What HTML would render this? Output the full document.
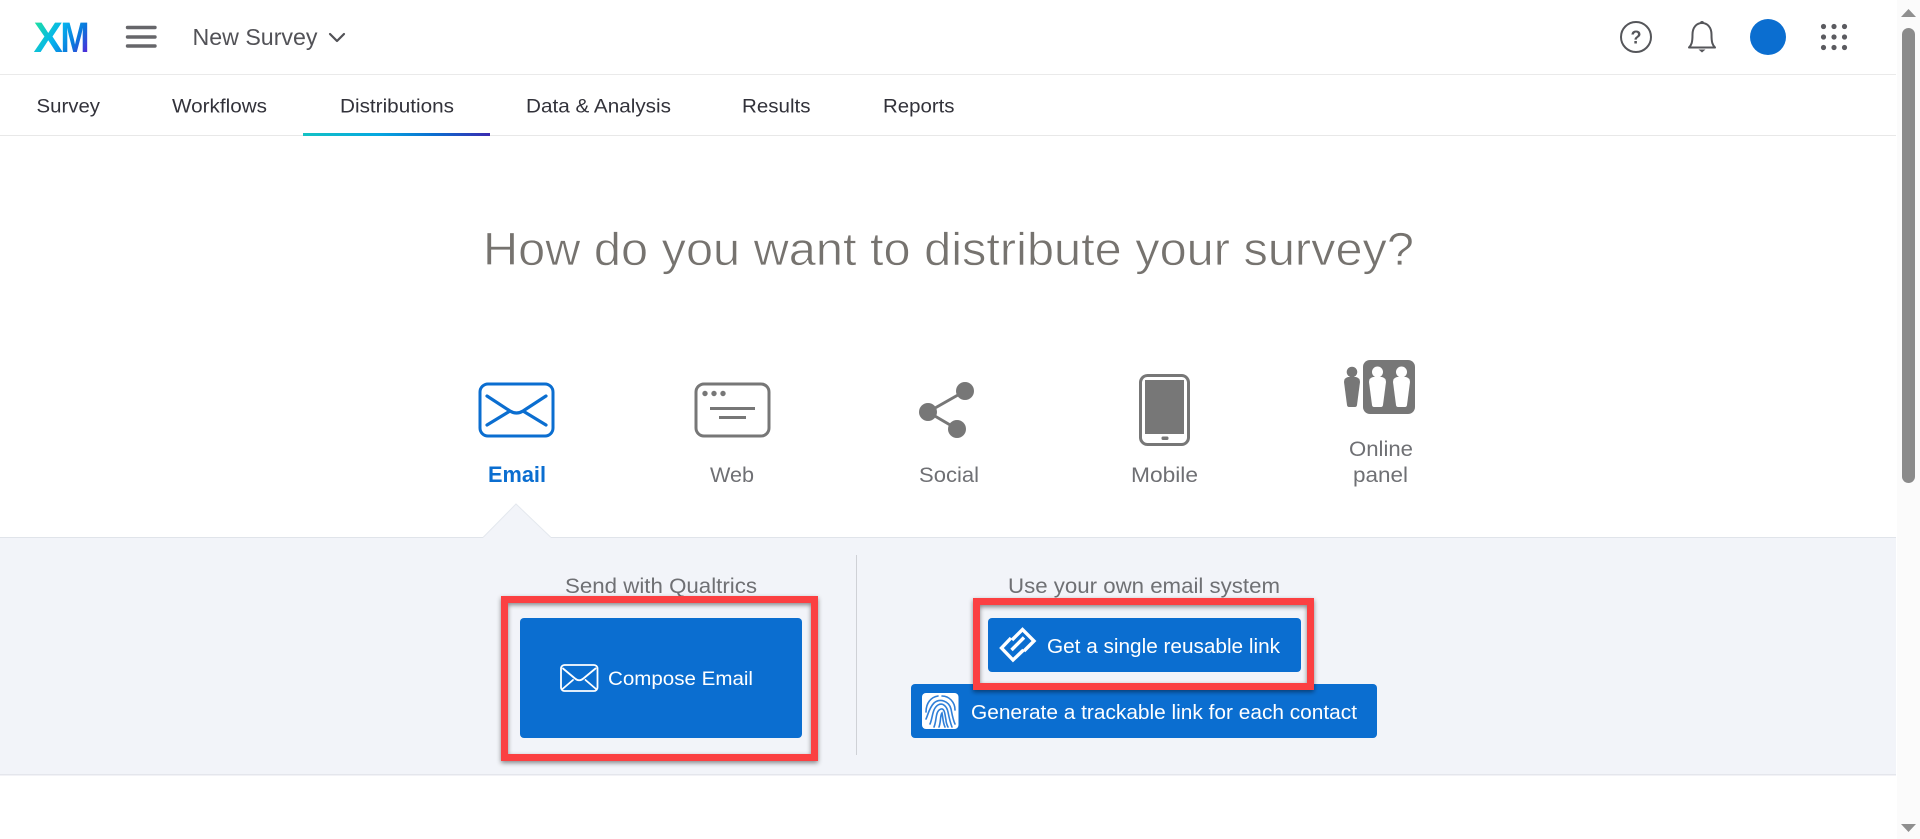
<!DOCTYPE html>
<html lang="en">
<head>
<meta charset="utf-8">
<title>Distributions</title>
<style>
html,body{margin:0;padding:0;background:#fff;overflow:hidden;width:1920px;height:839px}
svg{display:block}
text{font-family:"Liberation Sans",Arial,sans-serif;white-space:pre}
</style>
</head>
<body>
<svg xmlns="http://www.w3.org/2000/svg" width="1920" height="839" viewBox="0 0 1920 839">
<defs>
<linearGradient id="xm" gradientUnits="userSpaceOnUse" x1="36" y1="20" x2="88" y2="54">
<stop offset="0" stop-color="#1fe0a0"/><stop offset=".4" stop-color="#05b4ee"/><stop offset=".72" stop-color="#0b76dc"/><stop offset="1" stop-color="#5a1fd8"/>
</linearGradient>
<linearGradient id="ul" x1="0" y1="0" x2="1" y2="0">
<stop offset="0" stop-color="#14c2c4"/><stop offset=".4" stop-color="#05a8e0"/><stop offset=".7" stop-color="#0b6ed0"/><stop offset="1" stop-color="#3a2ab0"/>
</linearGradient>
<filter id="sh" x="-10%" y="-10%" width="120%" height="125%"><feDropShadow dx="0" dy="2" stdDeviation="2.500" flood-color="#000" flood-opacity=".45"/></filter>
</defs>

<rect width="1920" height="839" fill="#fff"/>

<!-- header -->
<g font-size="43" font-weight="700" fill="url(#xm)">
<text x="33.500" y="52" textLength="29.500" lengthAdjust="spacingAndGlyphs">X</text>
<text x="60.500" y="52" textLength="29" lengthAdjust="spacingAndGlyphs">M</text>
</g>
<g stroke="#66666a" stroke-width="3.400" stroke-linecap="round"><path d="M127.500 27.500H155M127.500 37H155M127.500 46H155"/></g>
<text x="192.500" y="45" font-size="23" fill="#525257" textLength="125" lengthAdjust="spacingAndGlyphs">New Survey</text>
<path d="M330 34l7 7 7-7" fill="none" stroke="#525257" stroke-width="2.200" stroke-linecap="round" stroke-linejoin="round"/>
<rect x="0" y="74" width="1896" height="1" fill="#eaeaea"/>

<circle cx="1636" cy="37" r="15" fill="none" stroke="#55565a" stroke-width="2"/>
<text x="1636" y="43.500" font-size="18" font-weight="700" fill="#55565a" text-anchor="middle">?</text>
<path d="M1689 47.500c2.500-2.500 3.500-5 3.500-13 0-7 4-11.500 9.500-11.500s9.500 4.500 9.500 11.500c0 8 1 10.500 3.500 13z" fill="none" stroke="#55565a" stroke-width="2" stroke-linejoin="round"/>
<path d="M1698.500 49.500h7l-3.500 3z M1700 23a2 2 0 0 1 4 0z" fill="#55565a"/>
<circle cx="1768" cy="37" r="18" fill="#0b6ed0"/>
<g fill="#5b5b60">
<circle cx="1823.500" cy="26.500" r="2.600"/><circle cx="1834" cy="26.500" r="2.600"/><circle cx="1844.500" cy="26.500" r="2.600"/>
<circle cx="1823.500" cy="37" r="2.600"/><circle cx="1834" cy="37" r="2.600"/><circle cx="1844.500" cy="37" r="2.600"/>
<circle cx="1823.500" cy="47.500" r="2.600"/><circle cx="1834" cy="47.500" r="2.600"/><circle cx="1844.500" cy="47.500" r="2.600"/>
</g>

<!-- nav -->
<g font-size="19.500" fill="#32323a">
<text x="36.500" y="112.500" textLength="63.500" lengthAdjust="spacingAndGlyphs">Survey</text>
<text x="172" y="112.500" textLength="95" lengthAdjust="spacingAndGlyphs">Workflows</text>
<text x="340" y="112.500" textLength="114" lengthAdjust="spacingAndGlyphs">Distributions</text>
<text x="526" y="112.500" textLength="145" lengthAdjust="spacingAndGlyphs">Data &amp; Analysis</text>
<text x="742" y="112.500" textLength="68.500" lengthAdjust="spacingAndGlyphs">Results</text>
<text x="883" y="112.500" textLength="71.500" lengthAdjust="spacingAndGlyphs">Reports</text>
</g>
<rect x="0" y="135" width="1896" height="1" fill="#e8e8e8"/>
<rect x="303" y="133" width="187" height="3" fill="url(#ul)"/>

<!-- heading -->
<text x="483" y="265" font-size="46" fill="#76736f" stroke="#fff" stroke-width=".7" textLength="931" lengthAdjust="spacingAndGlyphs">How do you want to distribute your survey?</text>

<!-- channel icons -->
<g fill="none" stroke="#0b6ed0" stroke-linecap="round" stroke-linejoin="round">
<rect x="480" y="384" width="73" height="52" rx="8" stroke-width="3"/>
<path d="M487 396L510 411q6.500 4 13 0L546 396M487 425L510 411M546 425L523 411" stroke-width="3.200"/>
</g>
<g fill="none" stroke="#777" stroke-width="3">
<rect x="696" y="384" width="73" height="52" rx="8"/>
<path d="M710 408.500H755M719 417.500H746"/>
</g>
<g fill="#777"><circle cx="705" cy="393.500" r="2.700"/><circle cx="714" cy="393.500" r="2.700"/><circle cx="723" cy="393.500" r="2.700"/></g>

<g fill="#777">
<path d="M928 412L965 391M928 412L957 429" stroke="#777" stroke-width="3" fill="none"/>
<circle cx="965" cy="391" r="9"/><circle cx="928" cy="412" r="9"/><circle cx="957" cy="429" r="9"/>
</g>

<rect x="1140.500" y="375.500" width="48" height="69" rx="7" fill="none" stroke="#777" stroke-width="3"/>
<rect x="1145" y="380" width="39" height="54" fill="#777"/>
<rect x="1161.500" y="436.500" width="7" height="3.500" rx="1.500" fill="#777"/>

<rect x="1363" y="360" width="52" height="54" rx="7" fill="#777"/>
<g fill="#777">
<circle cx="1352" cy="372" r="5.300"/>
<path d="M1344 382q0-4 4-5h8q4 1 4 5l-3 23q-.3 2-2 2h-6q-1.700 0-2-2z"/>
</g>
<g fill="#fff">
<circle cx="1377.500" cy="372" r="5.500"/><circle cx="1401.500" cy="372" r="5.500"/>
<path d="M1369 382q0-4 4-5h9q4 1 4 5l-3 23q-.3 2-2 2h-7q-1.700 0-2-2z"/>
<path d="M1393 382q0-4 4-5h9q4 1 4 5l-3 23q-.3 2-2 2h-7q-1.700 0-2-2z"/>
</g>

<!-- labels -->
<text x="488" y="482" font-size="22" font-weight="700" fill="#0b6ed0" textLength="58" lengthAdjust="spacingAndGlyphs">Email</text>
<g font-size="21.500" fill="#6f7074">
<text x="710" y="482" textLength="44" lengthAdjust="spacingAndGlyphs">Web</text>
<text x="919" y="482" textLength="60" lengthAdjust="spacingAndGlyphs">Social</text>
<text x="1131" y="482" textLength="67" lengthAdjust="spacingAndGlyphs">Mobile</text>
<text x="1349" y="456" textLength="64" lengthAdjust="spacingAndGlyphs">Online</text>
<text x="1353" y="482" textLength="55" lengthAdjust="spacingAndGlyphs">panel</text>
</g>

<!-- band -->
<rect x="0" y="537" width="1896" height="238" fill="#f2f4f9"/>
<rect x="0" y="537" width="483" height="1" fill="#e0e4ea"/>
<rect x="551" y="537" width="1345" height="1" fill="#e0e4ea"/>
<rect x="0" y="774" width="1896" height="1.500" fill="#e4e6ec"/>
<path d="M483 538L516 504L551 538z" fill="#f2f4f9"/>
<path d="M483 537.500L516 504L551 537.500" fill="none" stroke="#e4e8ee" stroke-width="1"/>
<rect x="856" y="555" width="1" height="200" fill="#cfd1d6"/>

<text x="565" y="593" font-size="21.500" fill="#6f7074" textLength="192" lengthAdjust="spacingAndGlyphs">Send with Qualtrics</text>
<text x="1008" y="593" font-size="21.500" fill="#6f7074" textLength="272" lengthAdjust="spacingAndGlyphs">Use your own email system</text>

<!-- buttons -->
<rect x="520" y="618" width="282" height="120" rx="4" fill="#0b6ed0"/>
<rect x="988" y="618" width="313" height="54" rx="4" fill="#0b6ed0"/>
<rect x="911" y="684" width="466" height="54" rx="4" fill="#0b6ed0"/>

<!-- email icon in button -->
<g fill="none" stroke="#fff" stroke-width="1.800" stroke-linejoin="round" stroke-linecap="round">
<rect x="561" y="665" width="36.500" height="26" rx="3.500"/>
<path d="M563 668.500L575 678.500q4.200 3.500 8.400 0L595.500 668.500M562.500 689L573 680M596 689L585.500 680"/>
</g>
<text x="608" y="685" font-size="19.500" fill="#fff" textLength="145" lengthAdjust="spacingAndGlyphs">Compose Email</text>

<!-- link icon -->
<g fill="none" stroke="#fff" stroke-width="3.400" stroke-linejoin="miter" stroke-linecap="butt">
<path d="M1012 640L1022.500 629.500L1034 641L1024 651"/>
<path d="M1011 638L1001.500 648L1013 660L1023.500 650"/>
<path d="M1011.500 650L1024 637.500"/>
</g>
<text x="1047" y="653" font-size="20" fill="#fff" textLength="233" lengthAdjust="spacingAndGlyphs">Get a single reusable link</text>

<!-- fingerprint -->
<rect x="922" y="693" width="36.500" height="36" rx="4" fill="#fff"/>
<g fill="none" stroke="#2f7fd8" stroke-width="1.600" stroke-linecap="round">
<path d="M926 712C926 703 931 697 938 696M942 696C949 696 955 702 955 710"/>
<path d="M926 719C928 715 929 708 934 703C940 698 949 701 951 709C952 714 953 720 955 724"/>
<path d="M930 724C933 717 932 709 938 705C943 702 947 707 948 712C949 717 950 722 952 727"/>
<path d="M934 727C937 720 935 711 941 709C945 708 945 716 946 720C946 723 947 725 948 727"/>
<path d="M939 727C941 722 940 715 942 713C943 718 943 723 945 727"/>
</g>
<text x="971" y="719" font-size="20" fill="#fff" textLength="386" lengthAdjust="spacingAndGlyphs">Generate a trackable link for each contact</text>

<!-- red annotation boxes -->
<rect x="504.500" y="599.500" width="310" height="158" fill="none" stroke="#fb4143" stroke-width="7" filter="url(#sh)"/>
<rect x="976.500" y="601.500" width="334" height="85" fill="none" stroke="#fb4143" stroke-width="7" filter="url(#sh)"/>

<!-- scrollbar -->
<rect x="1897" y="0" width="23" height="839" fill="#fbfbfb"/>
<path d="M1901 17L1908.500 9L1916 17z" fill="#8f8f8f"/>
<rect x="1902" y="28" width="13" height="455" rx="6.500" fill="#8b8b8b"/>
<path d="M1901 824L1908.500 832L1916 824z" fill="#8f8f8f"/>
</svg>
</body>
</html>
